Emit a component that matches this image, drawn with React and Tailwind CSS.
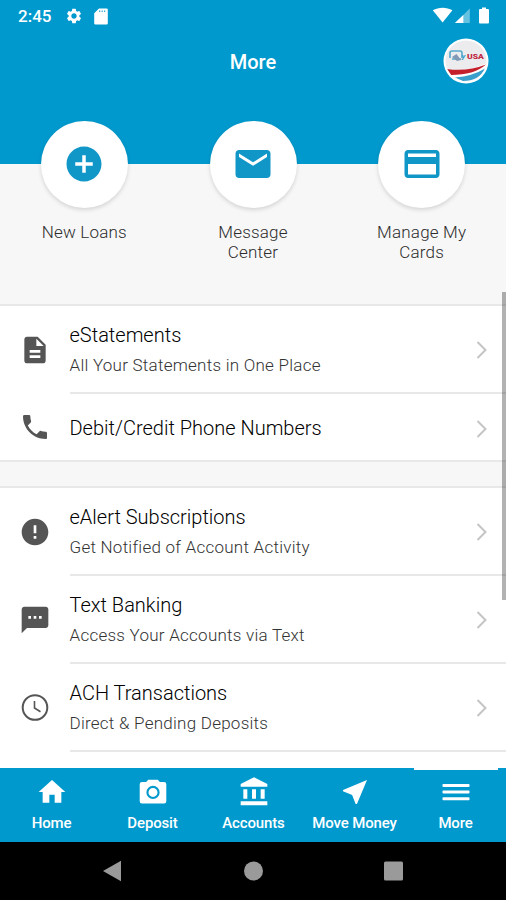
import {
  MdSettings,
  MdAddCircle,
  MdEmail,
  MdCreditCard,
  MdDescription,
  MdPhone,
  MdError,
  MdSms,
  MdHome,
  MdAccountBalance,
  MdNearMe,
} from "react-icons/md";

const shortcuts = [
  { label: "New Loans", icon: MdAddCircle },
  { label: "Message Center", icon: MdEmail },
  { label: "Manage My Cards", icon: MdCreditCard },
];

const groups = [
  [
    { title: "eStatements", subtitle: "All Your Statements in One Place", icon: MdDescription },
    { title: "Debit/Credit Phone Numbers", icon: MdPhone },
  ],
  [
    { title: "eAlert Subscriptions", subtitle: "Get Notified of Account Activity", icon: MdError },
    { title: "Text Banking", subtitle: "Access Your Accounts via Text", icon: MdSms },
    { title: "ACH Transactions", subtitle: "Direct & Pending Deposits", icon: ClockIcon },
  ],
];

const tabs = [
  { label: "Home", icon: MdHome },
  { label: "Deposit", icon: CameraIcon },
  { label: "Accounts", icon: MdAccountBalance },
  { label: "Move Money", icon: MdNearMe },
  { label: "More", icon: MenuIcon, active: true },
];

function ClockIcon({ className }) {
  return (
    <svg viewBox="0 0 32 32" className={className} fill="none" stroke="currentColor" strokeWidth="2">
      <circle cx="16" cy="15.5" r="12.3" />
      <path d="M15.5 9v7l6 3.8" strokeWidth="1.6" />
    </svg>
  );
}

function CameraIcon({ className }) {
  return (
    <svg viewBox="0 0 32 32" className={className}>
      <path
        fill="currentColor"
        fillRule="evenodd"
        d="M5 6h4.2l2-2.3h9.6l2 2.3H27a2.3 2.3 0 0 1 2.3 2.3v17A2.3 2.3 0 0 1 27 27.6H5a2.3 2.3 0 0 1-2.3-2.3v-17A2.3 2.3 0 0 1 5 6zM16 9.8a6.6 6.6 0 1 0 0 13.2 6.6 6.6 0 0 0 0-13.2zm0 2.1a4.5 4.5 0 1 1 0 9 4.5 4.5 0 0 1 0-9z"
      />
    </svg>
  );
}

function MenuIcon({ className }) {
  return (
    <svg viewBox="0 0 32 32" className={className} fill="currentColor">
      <rect x="2.5" y="8" width="27" height="3" rx="0.8" />
      <rect x="2.5" y="14.6" width="27" height="3" rx="0.8" />
      <rect x="2.5" y="21.2" width="27" height="3" rx="0.8" />
    </svg>
  );
}

function StatusBar() {
  return (
    <div className="flex h-8 items-center pl-[18px] pr-4">
      <span className="w-[34px] text-[17px] font-medium leading-none">2:45</span>
      <MdSettings className="ml-[13px] size-[18px]" />
      <svg viewBox="0 0 14 17" className="ml-[11px] h-[17px] w-[14px]" fill="currentColor">
        <path
          fillRule="evenodd"
          d="M5 0.5h7.5q1.3 0 1.3 1.3v13.4q0 1.3-1.3 1.3h-11q-1.3 0-1.3-1.3V5.3zM5.2 2.5v1.5h1v-1.5zM7.7 2.5v1.5h1v-1.5zM10.2 2.5v1.5h1v-1.5z"
        />
      </svg>
      <svg viewBox="0 0 58 18" className="ml-auto h-[18px] w-[58px]" fill="currentColor">
        <path d="M0.8 3.3C6.5 -0.2 14.7 -0.2 20.4 3.3L10.6 15.5z" />
        <path d="M22.8 16h8.7V7.7z" />
        <path d="M31.5 7.7v8.3h6.3V1.5z" opacity="0.4" />
        <path d="M46.5 3q0-1 1-1h2V0.5h4V2h2q1 0 1 1v12.500q0 1-1 1h-8q-1 0-1-1z" transform="translate(0.5 0)" />
      </svg>
    </div>
  );
}

function Avatar() {
  return (
    <svg viewBox="0 0 46 46" className="size-[46px]">
      <defs>
        <clipPath id="face">
          <circle cx="23" cy="23" r="20.5" />
        </clipPath>
      </defs>
      <circle cx="23" cy="23" r="22.5" fill="#fff" />
      <g clipPath="url(#face)">
        <rect width="46" height="46" fill="#ececef" />
        <path d="M0 32Q24 35 46 24v22H0z" fill="#fff" />
        <path d="M4 31Q24 34 43 26.5Q31 37 8 37z" fill="#c4202c" />
        <path d="M12 39.5Q30 38 42 30.5Q36 43 20 43z" fill="#3a9fcb" />
        <path d="M7 20v-5q0-2 2-2h8q2 0 2 2v5M9 21h9" fill="none" stroke="#55a9cc" strokeWidth="1.6" />
        <path d="M9 19l4.5-3 4.5 6-4 1z" fill="#8199b5" />
        <text x="18.5" y="20.5" fontSize="8" fontStyle="italic" fontWeight="700" fill="#3b9cc9">y</text>
        <text x="24" y="20.5" fontSize="7.5" fontWeight="900" fill="#c02c45" textLength="17" lengthAdjust="spacingAndGlyphs">USA</text>
      </g>
    </svg>
  );
}

function Shortcut({ label, icon: Icon }) {
  return (
    <button className="flex flex-1 flex-col items-center">
      <span className="flex size-[87px] items-center justify-center rounded-full bg-white shadow-[0_2px_4px_rgba(0,0,0,0.14)]">
        <Icon className="-mt-px size-[42px] text-[#1196c8]" />
      </span>
      <span className="mt-[14px] w-[110px] text-center text-[17px] font-light leading-5 tracking-[0.2px] text-[#2c2c2c]">
        {label}
      </span>
    </button>
  );
}

function Row({ title, subtitle, icon: Icon, last }) {
  return (
    <div className="flex items-stretch bg-white">
      <div className="flex w-[69.5px] items-center pl-[19px]">
        <Icon className="size-8 text-[#555]" />
      </div>
      <div
        className={`flex flex-1 items-center pr-4 ${subtitle ? "h-[88px]" : "h-[66px] pt-px"} ${
          last ? "" : "border-b-2 border-[#e8e8e8]"
        }`}
      >
        <div className="flex-1">
          <p className="text-xl font-light leading-6 text-black">{title}</p>
          {subtitle && (
            <p className="mt-2 text-[17px] font-light leading-5 tracking-[0.25px] text-[#333]">{subtitle}</p>
          )}
        </div>
        <svg viewBox="0 0 16 20" className="h-5 w-4" fill="none" stroke="#c4c4c4" strokeWidth="2">
          <path d="M3.5 3l8 8-8 8" />
        </svg>
      </div>
    </div>
  );
}

export default function App() {
  return (
    <div className="flex h-[900px] w-[506px] flex-col overflow-hidden bg-[#f7f7f7] font-['Roboto',sans-serif]">
      <header className="h-[164px] shrink-0 bg-[#0099cd] text-white">
        <StatusBar />
        <div className="grid grid-cols-[1fr_auto_1fr] items-center px-[17px] pt-[6px]">
          <span />
          <h1 className="pt-px text-xl font-medium">More</h1>
          <div className="flex justify-end">
            <Avatar />
          </div>
        </div>
      </header>

      <main className="relative min-h-0 flex-1">
        <div className="-mt-[43px] flex h-[183px]">
          {shortcuts.map((s) => (
            <Shortcut key={s.label} {...s} />
          ))}
        </div>
        <div className="flex flex-col gap-6">
          {groups.map((rows, i) => (
            <section key={i} className="border-y-2 border-[#e8e8e8]">
              {rows.map((row, j) => (
                <Row key={row.title} {...row} last={i === 0 && j === rows.length - 1} />
              ))}
              {i === 1 && <div className="h-10 bg-white" />}
            </section>
          ))}
        </div>
        {/* scroll thumb */}
        <div className="absolute right-0 top-32 h-[308px] w-1 bg-black/30" />
      </main>

      <nav className="relative z-10 flex h-[74px] shrink-0 bg-[#0099cd] pl-px text-white">
        {tabs.map(({ label, icon: Icon, active }) => (
          <button key={label} className="relative flex flex-1 flex-col items-center pt-2">
            {active && <span className="absolute top-0 h-0.5 w-[84px] bg-white" />}
            <Icon className="size-8" />
            <span className="mt-[5px] whitespace-nowrap text-[15px] font-medium leading-5 tracking-[-0.15px]">
              {label}
            </span>
          </button>
        ))}
      </nav>

      <div className="z-10 flex h-[58px] shrink-0 items-center justify-center bg-black text-[#9a9a9a]">
        <svg viewBox="0 0 304 22" className="h-[22px] w-[304px]" fill="currentColor">
          <path d="M20 0.8v20.4L2 11z" />
          <circle cx="152.5" cy="11" r="9.5" />
          <rect x="283" y="1.5" width="19" height="19" rx="1.5" />
        </svg>
      </div>
    </div>
  );
}
